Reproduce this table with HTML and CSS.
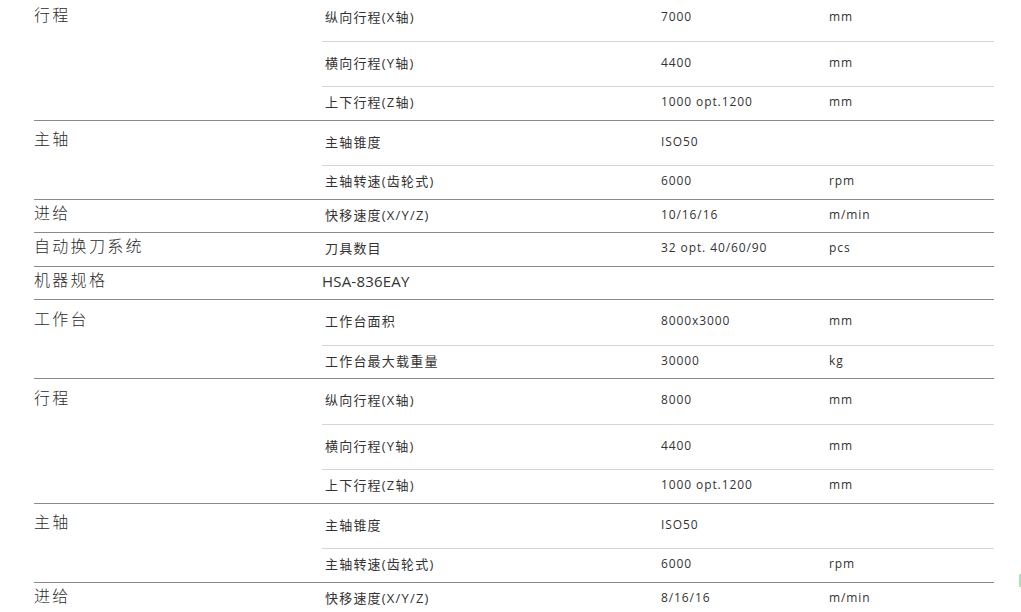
FILE: index.html
```html
<!DOCTYPE html>
<html lang="zh-CN">
<head>
<meta charset="utf-8">
<title>规格</title>
<link rel="stylesheet" href="styles.css">
</head>
<body>
<div class="specs">
  <div class="group multi">
    <div class="g-label">行程</div>
    <div class="rows">
      <div class="row"><span class="name">纵向行程(X轴)</span><span class="val">7000</span><span class="unit">mm</span></div>
      <div class="row"><span class="name">横向行程(Y轴)</span><span class="val">4400</span><span class="unit">mm</span></div>
      <div class="row"><span class="name">上下行程(Z轴)</span><span class="val">1000 opt.1200</span><span class="unit">mm</span></div>
    </div>
  </div>
  <div class="group multi">
    <div class="g-label">主轴</div>
    <div class="rows">
      <div class="row"><span class="name">主轴锥度</span><span class="val">ISO50</span><span class="unit"></span></div>
      <div class="row"><span class="name">主轴转速(齿轮式)</span><span class="val">6000</span><span class="unit">rpm</span></div>
    </div>
  </div>
  <div class="group">
    <div class="g-label">进给</div>
    <div class="rows">
      <div class="row"><span class="name">快移速度(X/Y/Z)</span><span class="val">10/16/16</span><span class="unit">m/min</span></div>
    </div>
  </div>
  <div class="group">
    <div class="g-label">自动换刀系统</div>
    <div class="rows">
      <div class="row"><span class="name">刀具数目</span><span class="val">32 opt. 40/60/90</span><span class="unit">pcs</span></div>
    </div>
  </div>
  <div class="group">
    <div class="g-label">机器规格</div>
    <div class="rows">
      <div class="row"><span class="name model">HSA-836EAY</span><span class="val"></span><span class="unit"></span></div>
    </div>
  </div>
  <div class="group multi">
    <div class="g-label">工作台</div>
    <div class="rows">
      <div class="row"><span class="name">工作台面积</span><span class="val">8000x3000</span><span class="unit">mm</span></div>
      <div class="row"><span class="name">工作台最大载重量</span><span class="val">30000</span><span class="unit">kg</span></div>
    </div>
  </div>
  <div class="group multi">
    <div class="g-label">行程</div>
    <div class="rows">
      <div class="row"><span class="name">纵向行程(X轴)</span><span class="val">8000</span><span class="unit">mm</span></div>
      <div class="row"><span class="name">横向行程(Y轴)</span><span class="val">4400</span><span class="unit">mm</span></div>
      <div class="row"><span class="name">上下行程(Z轴)</span><span class="val">1000 opt.1200</span><span class="unit">mm</span></div>
    </div>
  </div>
  <div class="group multi">
    <div class="g-label">主轴</div>
    <div class="rows">
      <div class="row"><span class="name">主轴锥度</span><span class="val">ISO50</span><span class="unit"></span></div>
      <div class="row"><span class="name">主轴转速(齿轮式)</span><span class="val">6000</span><span class="unit">rpm</span></div>
    </div>
  </div>
  <div class="group">
    <div class="g-label">进给</div>
    <div class="rows">
      <div class="row"><span class="name">快移速度(X/Y/Z)</span><span class="val">8/16/16</span><span class="unit">m/min</span></div>
    </div>
  </div>
</div>
<div class="side-tab"></div>
</body>
</html>
```

FILE: styles.css
```css
html, body {
  margin: 0;
  padding: 0;
  background: #ffffff;
  overflow: hidden;
}

body {
  font-family: "Open Sans", "Noto Sans CJK SC", sans-serif;
  color: #333333;
}

.specs {
  width: 960px;
  margin: -4px 0 0 34px;
}

.group {
  display: flex;
  border-bottom: 1px solid #8a8a8a;
}

.g-label {
  width: 288px;
  flex: none;
  height: 32.5px;
  box-sizing: border-box;
  padding-bottom: 8px;
  display: flex;
  align-items: center;
  font-family: "Noto Sans CJK SC", sans-serif;
  font-size: 16px;
  font-weight: 300;
  letter-spacing: 2.3px;
  color: #2b2b2b;
}

.group.multi .g-label {
  height: 44.5px;
  padding-bottom: 9px;
}

.rows {
  flex: 1;
  display: flex;
  flex-direction: column;
}

.row {
  display: grid;
  grid-template-columns: 336px 168px 168px;
  height: 44.5px;
  border-bottom: 1px solid #d4d4d4;
  font-size: 12px;
  letter-spacing: 0.9px;
}

.row:last-child {
  height: 32.5px;
  border-bottom: none;
}

.row > span {
  display: flex;
  align-items: center;
  padding: 0 0 3px 3px;
}

.name {
  font-family: "Open Sans", "Noto Sans CJK SC", sans-serif;
  font-size: 13px;
  letter-spacing: 1.2px;
}

.name.model {
  font-size: 15px;
  letter-spacing: 0.2px;
  padding-left: 0;
}

.side-tab {
  position: fixed;
  right: 0;
  top: 574px;
  width: 2px;
  height: 13px;
  background: #a8e4b8;
}
```
